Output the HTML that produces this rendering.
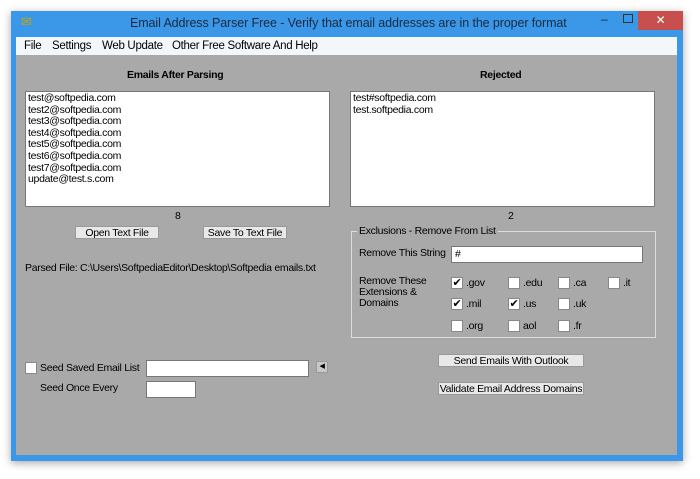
<!DOCTYPE html><html><head><style>
body{margin:0;width:700px;height:479px;background:#fff;position:relative;overflow:hidden;font-family:"Liberation Sans",sans-serif;font-size:10.5px;letter-spacing:-0.3px;color:#000}
.a{position:absolute}
.box{position:absolute;background:#fff;border:1px solid #777;box-sizing:border-box}
.btn{position:absolute;background:#e8e8e8;border:1px solid #999;box-sizing:border-box;text-align:center;line-height:12px;white-space:nowrap}
.cb{position:absolute;width:12px;height:12px;background:#fff;border:1px solid #888;box-sizing:border-box;font-size:11px;line-height:10px;text-align:center}
.t{position:absolute;white-space:nowrap}
</style></head><body>
<div class="a" style="left:11px;top:11px;width:672px;height:450px;background:#3b98e8;box-shadow:0 2px 8px rgba(0,0,0,.35)"></div>
<div class="t" style="left:21px;top:14px;font-size:13px;color:#c8a600">✉</div>
<div class="t" style="left:130px;top:16px;font-size:12.5px;letter-spacing:-0.1px;color:#1a2a40">Email Address Parser Free - Verify that email addresses are in the proper format</div>
<div class="t" style="left:601px;top:12px;color:#222;font-size:12px">–</div>
<div class="a" style="left:623px;top:14px;width:8px;height:7px;border:1px solid #333"></div>
<div class="a" style="left:638px;top:11px;width:45px;height:19px;background:#c7504e;color:#fff;text-align:center;font-size:12px;line-height:19px">✕</div>
<div class="a" style="left:16px;top:37px;width:661px;height:18px;background:#f4f7fa"></div>
<div class="t" style="left:24px;top:40px;font-size:11.5px">File</div>
<div class="t" style="left:52px;top:40px;font-size:11.5px">Settings</div>
<div class="t" style="left:102px;top:40px;font-size:11.5px">Web Update</div>
<div class="t" style="left:172px;top:40px;font-size:11.5px">Other Free Software And Help</div>
<div class="a" style="left:16px;top:55px;width:661px;height:400px;background:#a9a9a9"></div>
<div class="t" style="left:127px;top:69px;font-weight:bold">Emails After Parsing</div>
<div class="t" style="left:480px;top:69px;font-weight:bold">Rejected</div>
<div class="box" style="left:25px;top:91px;width:305px;height:116px;padding:1px 2px;line-height:11.6px;font-size:10.5px">test@softpedia.com<br>test2@softpedia.com<br>test3@softpedia.com<br>test4@softpedia.com<br>test5@softpedia.com<br>test6@softpedia.com<br>test7@softpedia.com<br>update@test.s.com</div>
<div class="box" style="left:350px;top:91px;width:305px;height:116px;padding:1px 2px;line-height:11.6px;font-size:10.5px">test#softpedia.com<br>test.softpedia.com</div>
<div class="t" style="left:175px;top:210px">8</div>
<div class="t" style="left:508px;top:210px">2</div>
<div class="btn" style="left:75px;top:226px;width:84px;height:13px">Open Text File</div>
<div class="btn" style="left:203px;top:226px;width:84px;height:13px">Save To Text File</div>
<div class="t" style="left:25px;top:262px">Parsed File: C:\Users\SoftpediaEditor\Desktop\Softpedia emails.txt</div>
<div class="a" style="left:351px;top:231px;width:305px;height:107px;border:1px solid #ddd;box-sizing:border-box"></div>
<div class="t" style="left:357px;top:225px;background:#a9a9a9;padding:0 2px">Exclusions - Remove From List</div>
<div class="t" style="left:359px;top:247px">Remove This String</div>
<div class="box" style="left:451px;top:246px;width:192px;height:17px;padding:1px 3px">#</div>
<div class="t" style="left:359px;top:276px;line-height:11px">Remove These<br>Extensions &amp;<br>Domains</div>
<div class="cb" style="left:451px;top:277px">✔</div><div class="t" style="left:466px;top:277px">.gov</div>
<div class="cb" style="left:508px;top:277px"></div><div class="t" style="left:523px;top:277px">.edu</div>
<div class="cb" style="left:558px;top:277px"></div><div class="t" style="left:573px;top:277px">.ca</div>
<div class="cb" style="left:608px;top:277px"></div><div class="t" style="left:623px;top:277px">.it</div>
<div class="cb" style="left:451px;top:298px">✔</div><div class="t" style="left:466px;top:298px">.mil</div>
<div class="cb" style="left:508px;top:298px">✔</div><div class="t" style="left:523px;top:298px">.us</div>
<div class="cb" style="left:558px;top:298px"></div><div class="t" style="left:573px;top:298px">.uk</div>
<div class="cb" style="left:451px;top:320px"></div><div class="t" style="left:466px;top:320px">.org</div>
<div class="cb" style="left:508px;top:320px"></div><div class="t" style="left:523px;top:320px">aol</div>
<div class="cb" style="left:558px;top:320px"></div><div class="t" style="left:573px;top:320px">.fr</div>
<div class="btn" style="left:438px;top:354px;width:146px;height:13px">Send Emails With Outlook</div>
<div class="btn" style="left:438px;top:382px;width:146px;height:13px">Validate Email Address Domains</div>
<div class="cb" style="left:25px;top:362px"></div>
<div class="t" style="left:40px;top:362px">Seed Saved Email List</div>
<div class="box" style="left:146px;top:360px;width:163px;height:17px"></div>
<div class="btn" style="left:316px;top:361px;width:12px;height:12px;font-size:7px;line-height:10px;background:#c8c8c8">◀</div>
<div class="t" style="left:40px;top:382px">Seed Once Every</div>
<div class="box" style="left:146px;top:381px;width:50px;height:17px"></div>
</body></html>
